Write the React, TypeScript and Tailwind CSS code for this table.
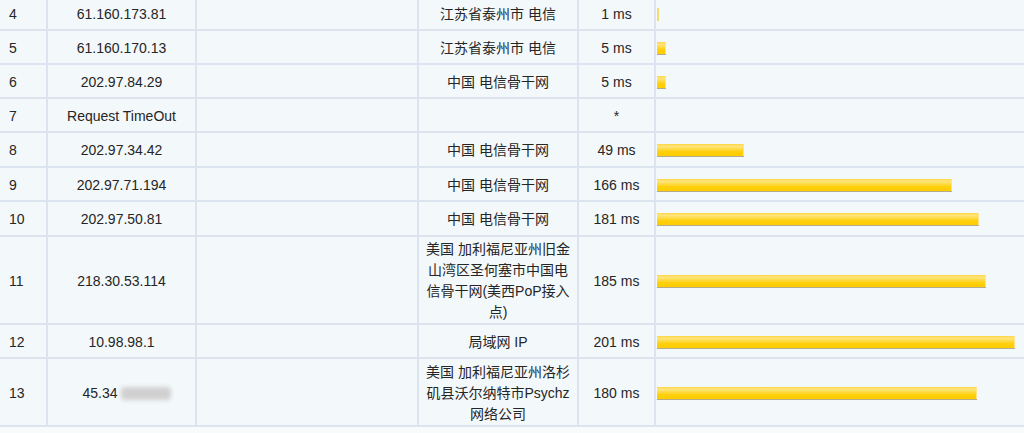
type Hop = {
  no: number;
  ip: string;
  masked?: boolean;
  geo: string;
  ms?: number;
  tall?: string;
};

const hops: Hop[] = [
  { no: 4, ip: '61.160.173.81', geo: '江苏省泰州市 电信', ms: 1 },
  { no: 5, ip: '61.160.170.13', geo: '江苏省泰州市 电信', ms: 5 },
  { no: 6, ip: '202.97.84.29', geo: '中国 电信骨干网', ms: 5 },
  { no: 7, ip: 'Request TimeOut', geo: '' },
  { no: 8, ip: '202.97.34.42', geo: '中国 电信骨干网', ms: 49, tall: 'min-h-[35px]' },
  { no: 9, ip: '202.97.71.194', geo: '中国 电信骨干网', ms: 166 },
  { no: 10, ip: '202.97.50.81', geo: '中国 电信骨干网', ms: 181, tall: 'min-h-[35px]' },
  { no: 11, ip: '218.30.53.114', geo: '美国 加利福尼亚州旧金山湾区圣何塞市中国电信骨干网(美西PoP接入点)', ms: 185 },
  { no: 12, ip: '10.98.98.1', geo: '局域网 IP', ms: 201 },
  { no: 13, ip: '45.34', masked: true, geo: '美国 加利福尼亚州洛杉矶县沃尔纳特市Psychz网络公司', ms: 180, tall: 'min-h-[68px]' },
];

function Bar({ ms }: { ms: number }) {
  const width = Math.max(2, Math.round(ms * 1.78));
  if (ms <= 1) {
    return <div className="h-[13px] w-[2px] bg-[#f5dc70]" />;
  }
  return (
    <div
      className="h-[13px] border-b border-[#b3ab8c] bg-[linear-gradient(to_bottom,#ffd53a_0%,#ffe583_18%,#ffdc4a_40%,#ffcf0a_65%,#ffcc00_100%)] shadow-[inset_-1px_0_0_#ffe58a]"
      style={{ width }}
    />
  );
}

function Row({ hop }: { hop: Hop }) {
  const cell = 'flex items-center border-r-2 border-[#dbe4ef] pt-[2px]';
  return (
    <div className={`flex min-h-[34px] border-b-2 border-[#dbe4ef] ${hop.tall ?? ''}`}>
      <div className={`${cell} w-[48px] shrink-0 pl-[9px]`}>{hop.no}</div>
      <div className={`${cell} w-[149px] shrink-0 justify-center ${hop.masked ? 'pl-[10px]' : ''}`}>
        {hop.ip}
        {hop.masked && (
          <span className="ml-[3px] inline-block h-[13px] w-[50px] rounded-sm bg-[#d0d0d0] blur-[2px]" />
        )}
      </div>
      <div className={`${cell} w-[222px] shrink-0`} />
      <div className={`${cell} w-[160px] shrink-0 justify-center px-[5px] text-center`}>{hop.geo}</div>
      <div className={`${cell} w-[77px] shrink-0 justify-center`}>{hop.ms ? `${hop.ms} ms` : '*'}</div>
      <div className="flex flex-1 items-center pl-px pt-[2px]">{hop.ms ? <Bar ms={hop.ms} /> : null}</div>
    </div>
  );
}

export default function App() {
  return (
    <div className="h-[433px] w-[1024px] overflow-hidden bg-[#f8fbfc] font-['Liberation_Sans','Noto_Sans_CJK_SC',sans-serif] text-[14px] leading-[21px] text-[#262626]">
      <div className="-mt-[3px] bg-[#f3f8fa]">
        {hops.map((hop) => (
          <Row key={hop.no} hop={hop} />
        ))}
      </div>
    </div>
  );
}
